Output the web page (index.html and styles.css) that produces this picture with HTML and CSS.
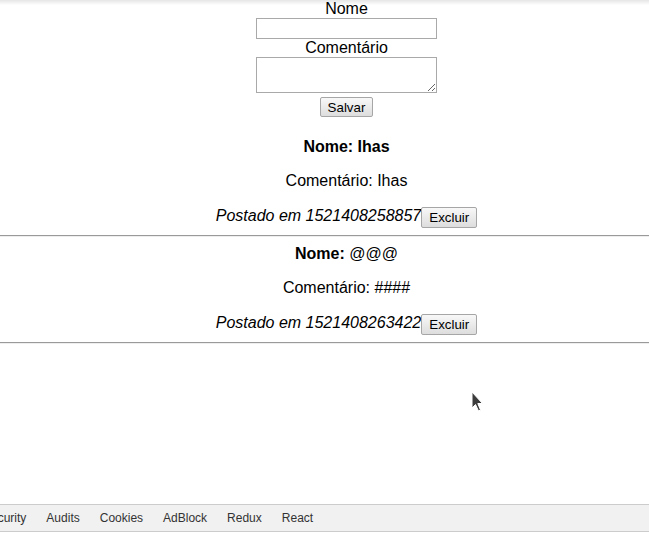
FILE: index.html
```html
<!DOCTYPE html>
<html lang="pt">
<head>
<meta charset="utf-8">
<title>Comentários</title>
<link rel="stylesheet" href="styles.css">
</head>
<body>
<div class="viewport">
  <main class="page">
    <form class="form">
      <label class="label" for="nome">Nome</label>
      <input class="field" id="nome" type="text">
      <label class="label" for="comentario">Comentário</label>
      <textarea class="area" id="comentario"></textarea>
      <button class="btn save" type="button">Salvar</button>
    </form>
    <section class="comments">
      <article class="comment">
        <h4 class="c-name"><b>Nome:</b> <b>Ihas</b></h4>
        <p class="c-text">Comentário: Ihas</p>
        <div class="c-meta"><em>Postado em 1521408258857</em><button class="btn" type="button">Excluir</button></div>
        <hr class="sep">
      </article>
      <article class="comment">
        <h4 class="c-name"><b>Nome:</b> <span class="plain">@@@</span></h4>
        <p class="c-text">Comentário: ####</p>
        <div class="c-meta"><em>Postado em 1521408263422</em><button class="btn" type="button">Excluir</button></div>
        <hr class="sep">
      </article>
    </section>
  </main>
  <div class="shade"></div>
  <svg class="cursor" width="14" height="22" viewBox="0 0 14 22" aria-hidden="true">
    <path d="M1 1 L1 17 L4.5 13.5 L7.5 20 L9.5 19 L6.8 12.5 L11.5 12.5 Z" fill="#3c3c3c" stroke="#fff" stroke-width="1"/>
  </svg>
</div>
<nav class="devbar">
  <div class="tabs">
    <span class="tab">Security</span>
    <span class="tab">Audits</span>
    <span class="tab">Cookies</span>
    <span class="tab">AdBlock</span>
    <span class="tab">Redux</span>
    <span class="tab">React</span>
  </div>
</nav>
</body>
</html>
```

FILE: styles.css
```css
html, body {
  margin: 0;
  padding: 0;
  overflow: hidden;
  background: #fff;
}
body {
  width: 649px;
  height: 534px;
  display: flex;
  flex-direction: column;
  font-family: "Liberation Sans", Arial, sans-serif;
  font-size: 16px;
  color: #000;
}
.viewport {
  position: relative;
  height: 504px;
  overflow: hidden;
  flex: none;
}
.page {
  width: 693px;
}
.form {
  display: flex;
  flex-direction: column;
  align-items: center;
  margin: 0;
}
.label {
  display: block;
  line-height: 18px;
  height: 18px;
}
.field {
  box-sizing: border-box;
  width: 181px;
  height: 21px;
  margin: 0;
  border: 1px solid #a9a9a9;
  padding: 1px 2px;
  font: 13.33px "Liberation Sans", Arial, sans-serif;
}
.area {
  box-sizing: border-box;
  width: 181px;
  height: 36px;
  margin: 0;
  border: 1px solid #a9a9a9;
  padding: 2px;
  font: 13.33px "Liberation Mono", monospace;
  resize: both;
}
.btn {
  box-sizing: border-box;
  height: 21px;
  margin: 0;
  padding: 1px 7px;
  font: 13.33px "Liberation Sans", Arial, sans-serif;
  color: #000;
  background: linear-gradient(#f8f8f8, #dddddd);
  border: 1px solid #a6a6a6;
  border-radius: 2px;
}
.save {
  margin-top: 4px;
  height: 20px;
}
.comments {
  margin-top: 21px;
}
.comment {
  text-align: center;
}
.c-name {
  margin: 0;
  font-size: 16px;
  line-height: 18.4px;
}
.plain {
  font-weight: normal;
}
.c-text {
  margin: 16px 0;
  line-height: 18.4px;
}
.c-meta {
  display: flex;
  justify-content: center;
  align-items: flex-start;
  line-height: 18.4px;
}
.sep {
  margin: 7px 0 8px;
  border: 0;
  border-top: 1px solid #9a9a9a;
  border-bottom: 1px solid #eeeeee;
  height: 0;
}
.shade {
  position: absolute;
  top: 0;
  left: 0;
  right: 0;
  height: 5px;
  background: linear-gradient(rgba(0, 0, 0, 0.1), rgba(0, 0, 0, 0));
  pointer-events: none;
}
.cursor {
  position: absolute;
  left: 471px;
  top: 391px;
}
.devbar {
  flex: none;
  box-sizing: border-box;
  height: 28px;
  border-top: 1px solid #cccccc;
  border-bottom: 1px solid #cccccc;
  background: #f1f1f1;
  overflow: hidden;
}
.tabs {
  display: flex;
  margin-left: -27px;
  height: 26px;
  align-items: center;
}
.tab {
  padding: 0 10px;
  font-size: 12px;
  color: #333333;
  white-space: nowrap;
}
```
